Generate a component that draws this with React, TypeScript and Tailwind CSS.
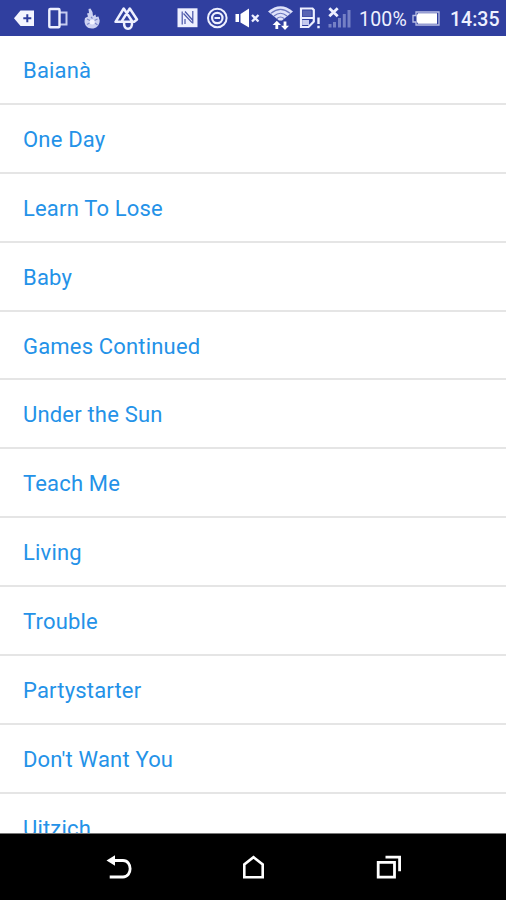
import type { ReactNode } from "react";

const songs = [
  "Baianà", "One Day", "Learn To Lose", "Baby", "Games Continued", "Under the Sun",
  "Teach Me", "Living", "Trouble", "Partystarter", "Don't Want You", "Uitzich",
];

function Glyph({ box, className, children }: { box: string; className: string; children: ReactNode }) {
  return (
    <svg viewBox={box} className={`h-9 shrink-0 ${className}`} fill="none" stroke="#eef0ff" strokeWidth="2">
      {children}
    </svg>
  );
}

function StatusBar() {
  return (
    <header className="flex h-9 w-full shrink-0 items-center bg-[#303f9f] text-[#eef0ff]">
      <Glyph box="14 0 20 36" className="ml-[14px] w-5">
        <path d="M14 18.3 L20.5 10.5 H34 V26 H20.5 Z" fill="#f4f5ff" stroke="none" />
        <path d="M23.3 18.3 H31.3 M27.3 14.3 V22.3" stroke="#303f9f" />
      </Glyph>
      <Glyph box="48 0 20 36" className="ml-[14px] w-5">
        <path d="M59.5 12.5 H66.5 V24.5 H59.5" stroke="#c5cbef" />
        <rect x="49.3" y="9" width="10.2" height="18.2" rx="1" strokeWidth="2.4" />
      </Glyph>
      <Glyph box="84 0 16 36" className="ml-4 w-4">
        <path d="M84.5 21 L85 18 L88 16.5 L87 13.5 L89 13 L88.5 9 L90.5 8.5 L92.5 12 L93 16 L95.5 14.5 L96 17 L98.5 16.5 L99.7 20.5 C99.5 26 96 28.5 92 28.5 C87 28.5 84.5 25 84.5 21 Z" fill="#cdd2f2" stroke="none" />
        <path d="M87 19 L90 20.5 M94.5 20.5 L97.5 19 M87 24.5 L89.5 23 M95 23 L97.5 25 M91 17 L92.5 18.5" stroke="#7d88cb" strokeWidth="1.1" />
        <circle cx="92.2" cy="22" r="2.5" fill="#f3f4ff" stroke="none" />
      </Glyph>
      <Glyph box="114 0 25 36" className="ml-[14px] w-[25px]">
        <path d="M121.3 21.8 L129.8 8.5 L137 19.5 L134.2 21.8 H115.5 L123.7 8.5 L132.3 21.5 M124 22.5 C124 26.5 125.5 28.8 128 28.8 C130.7 28.8 132.3 26.3 132 22.5" strokeWidth="2.5" strokeLinejoin="round" />
      </Glyph>
      <Glyph box="177 0 21 36" className="ml-[38px] w-[21px]">
        <path d="M177.5 8.3 H197.5 V27.2 H177.5 Z" fill="#eef0ff" stroke="none" />
        <path d="M182.2 24.5 V11.5 M183.5 13.5 L192 22.7 M185 11.5 L192.5 20 M192.8 23.5 V11 M185 24 V19" stroke="#4854a8" strokeWidth="1.2" />
      </Glyph>
      <Glyph box="207 0 21 36" className="ml-[9px] w-[21px]">
        <circle cx="217.3" cy="18" r="9.3" strokeWidth="2" />
        <circle cx="217.3" cy="18" r="5.2" strokeWidth="2.2" />
        <path d="M214.5 18 H220" strokeWidth="2" />
      </Glyph>
      <Glyph box="235 0 25 36" className="ml-[7px] w-[25px]">
        <path d="M240.5 14 L249 8.5 V27.5 L240.5 22.5 Z M235.5 14 H239 V22 H235.5 Z" fill="#fff" stroke="none" />
        <path d="M252 15 L258.5 21.5 M258.5 15 L252 21.5" strokeWidth="2.3" />
      </Glyph>
      <Glyph box="267 0 27 36" className="ml-[7px] w-[27px]">
        <path d="M268 11.5 Q280.5 1 293 11.5 L282 20.5 H279 Z" fill="#dfe2fa" stroke="none" />
        <path d="M271 13.2 Q280.5 5.5 290 13.2 M274 16 Q280.5 10.5 287 16 M277 18.5 Q280.5 15.5 284 18.5" stroke="#6c77be" strokeWidth="1.2" />
        <path d="M276.8 20.8 L281 25 H278.2 V29 H275.4 V25 H272.6 Z M285 30 L289 25.7 H286.4 V21.5 H283.6 V25.7 H281 Z" fill="#fff" stroke="none" />
      </Glyph>
      <Glyph box="299 0 22 36" className="ml-[5px] w-[22px]">
        <path d="M301 8.5 H312.5 L313.8 10 V21.5 L308.5 27 H301 Z" strokeWidth="2.2" />
        <path d="M303 10.5 H311.5 V16.5 H303 Z" fill="#5964b3" stroke="none" />
        <path d="M301 18 H314" strokeWidth="2" />
        <path d="M302.2 20 H309 V25 H302.2 Z" fill="#c5caee" stroke="none" />
        <path d="M318.5 17.5 V24 M318.5 25.8 V28.3" strokeWidth="2.4" />
      </Glyph>
      <Glyph box="328 0 23 36" className="ml-[7px] w-[23px]">
        <path d="M330 24 V27.5 M334.5 22 V27.5 M339.5 18 V27.5 M344.3 14 V27.5 M349 10 V27.5" stroke="#7580c5" strokeWidth="3" />
        <path d="M329.3 8.3 L337.7 16.3 M337.7 8.3 L329.3 16.3" strokeWidth="2.8" />
      </Glyph>
      <span className="ml-2 mt-[3px] w-[49px] shrink-0 whitespace-nowrap text-[19.5px] leading-none tracking-[0.2px]">100%</span>
      <Glyph box="412 0 28 36" className="ml-1 w-7">
        <path d="M416 12 H439 V25 H416 V22 H413 V15.5 H416 Z" strokeWidth="1.3" stroke="#b9bfe5" />
        <path d="M418 13.3 H437 V23.7 H418 L416.5 21 V16 Z" fill="#fff" stroke="none" />
      </Glyph>
      <span className="ml-[10px] mt-[3px] shrink-0 whitespace-nowrap text-[19.5px] font-medium leading-none">14:35</span>
    </header>
  );
}

export default function App() {
  return (
    <div className="flex h-[900px] w-[506px] flex-col overflow-hidden bg-white font-['Roboto',sans-serif]">
      <StatusBar />
      <main className="min-h-0 flex-1 overflow-hidden">
        <ul>
          {songs.map((song) => (
            <li key={song} className="flex h-[68.9px] items-center border-b-2 border-[#e5e5e5] pl-[23px] pt-[3px] text-[22px] leading-none tracking-[0.18px] text-[#2492e8]">
              {song}
            </li>
          ))}
        </ul>
      </main>
      <nav className="flex h-[67px] shrink-0 items-center border-t border-[#777] bg-black pl-[106px]">
        <svg viewBox="106 853 27 27" className="size-[27px]" fill="none" stroke="#fff" strokeWidth="2.8">
          <path d="M112 859.5 H123 C132.5 859.5 132.5 876 123 876 H109.7" />
          <path d="M106.5 859.5 L115 854.3 V864.7 Z" fill="#fff" stroke="none" />
        </svg>
        <svg viewBox="240 853 27 27" className="ml-[107px] size-[27px]" fill="none" stroke="#fff" strokeWidth="2.6">
          <path d="M244.3 876.2 V863.5 L253.5 856.2 L262.7 863.5 V876.2 Z" />
        </svg>
        <svg viewBox="375 853 27 27" className="ml-[108px] size-[27px]" fill="none" stroke="#fff" strokeWidth="2.8">
          <path d="M378.2 861.3 H394.5 V876.2 H378.2 Z M385.5 856.2 H399.6 V870.2" />
        </svg>
      </nav>
    </div>
  );
}
